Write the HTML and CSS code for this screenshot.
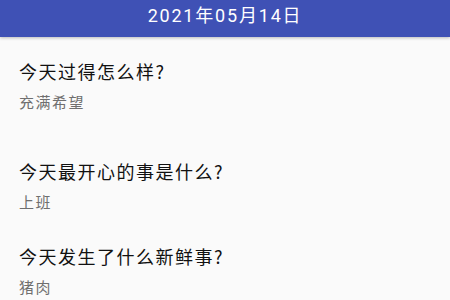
FILE: index.html
```html
<!DOCTYPE html>
<html lang="zh-CN">
<head>
<meta charset="utf-8">
<link rel="stylesheet" href="styles.css">
</head>
<body>
<div class="app">
  <header class="bar">2021年05月14日</header>
  <main class="list">
    <section class="item item-first">
      <div class="q">今天过得怎么样?</div>
      <div class="a">充满希望</div>
    </section>
    <section class="item item-second">
      <div class="q">今天最开心的事是什么?</div>
      <div class="a">上班</div>
    </section>
    <section class="item">
      <div class="q">今天发生了什么新鲜事?</div>
      <div class="a">猪肉</div>
    </section>
  </main>
</div>
</body>
</html>
```
FILE: styles.css
```css
html, body {
  margin: 0;
  padding: 0;
  width: 450px;
  height: 300px;
  overflow: hidden;
  background: #fafafa;
}
.app {
  display: flex;
  flex-direction: column;
  font-family: Roboto, "Noto Sans CJK SC", sans-serif;
}
.bar {
  height: 37px;
  background: #3f51b5;
  color: #ffffff;
  font-size: 18px;
  letter-spacing: 1.8px;
  display: flex;
  align-items: center;
  justify-content: center;
  padding-bottom: 10px;
  box-sizing: border-box;
  box-shadow: 0 1px 3px rgba(0,0,0,0.25);
  position: relative;
  z-index: 1;
}
.list {
  display: flex;
  flex-direction: column;
  padding: 22px 0 0 19px;
}
.item {
  display: flex;
  flex-direction: column;
  gap: 7px;
}
.item-first {
  margin-bottom: 45px;
}
.item-second {
  margin-bottom: 30px;
}
.q {
  font-size: 18px;
  line-height: 24px;
  letter-spacing: 1.5px;
  color: #111111;
  font-family: "Noto Sans CJK SC", sans-serif;
}
.a {
  font-size: 15px;
  line-height: 24px;
  letter-spacing: 1.5px;
  color: #6f6f6f;
  font-family: "Noto Sans CJK SC", sans-serif;
}
```
